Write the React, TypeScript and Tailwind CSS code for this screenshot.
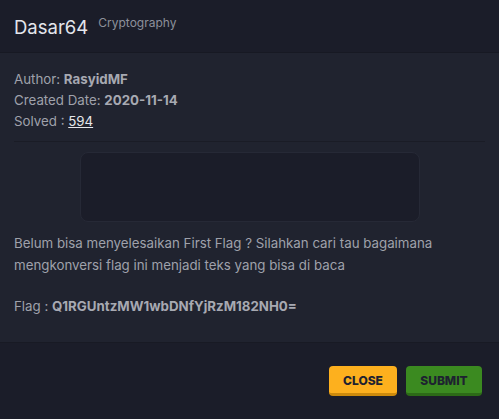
import React from "react";

export default function App() {
  return (
    <div className="w-[499px] h-[419px] overflow-hidden bg-[#1b1d29] text-[#9fa1ab]" style={{ fontFamily: "Inter, 'Noto Sans', sans-serif" }}>
      <div className="h-[53px] flex items-start px-[14px] pt-[14px] bg-[#1b1d29] border-b border-[#171923]">
        <span className="text-[18.5px] leading-[26px] text-[#e4e6ec]">Dasar64</span>
        <span className="ml-[10px] text-[12px] leading-[16px] mt-[1px] text-[#8d909b]">Cryptography</span>
      </div>
      <div className="h-[290px] bg-[#20232f] px-[14px] pt-[16px] text-[13.3px] border-b border-[#181a24]">
        <div className="leading-[21px]">
          <div>Author: <b className="text-[#a7a9b2]">RasyidMF</b></div>
          <div>Created Date: <b className="text-[#a7a9b2]">2020-11-14</b></div>
          <div>Solved : <span className="underline text-[#e6e7eb]">594</span></div>
        </div>
        <div className="mt-[9px] border-t border-[#1a1c26]" />
        <div className="flex justify-center mt-[10px]">
          <div className="w-[340px] h-[70px] rounded-[8px] bg-[#1b1d29] border border-[#262936]" />
        </div>
        <div className="mt-[10px] leading-[22px]">
          <div>Belum bisa menyelesaikan First Flag ? Silahkan cari tau bagaimana mengkonversi flag ini menjadi teks yang bisa di baca</div>
          <div className="mt-[19px]">Flag : <b className="text-[#a7a9b2]">Q1RGUntzMW1wbDNfYjRzM182NH0=</b></div>
        </div>
      </div>
      <div className="flex justify-end gap-[9px] pr-[17px] pt-[23px]">
        <button className="w-[68px] h-[30px] rounded-[4px] bg-[#fdb01e] border-b-[3px] border-[#cd8a0c] text-[12px] font-extrabold text-[#1e2230] pt-[2px]">CLOSE</button>
        <button className="w-[76px] h-[30px] rounded-[4px] bg-[#3b8a20] border-b-[3px] border-[#2c6a17] text-[12px] font-extrabold text-[#1e2230] pt-[2px]">SUBMIT</button>
      </div>
    </div>
  );
}
